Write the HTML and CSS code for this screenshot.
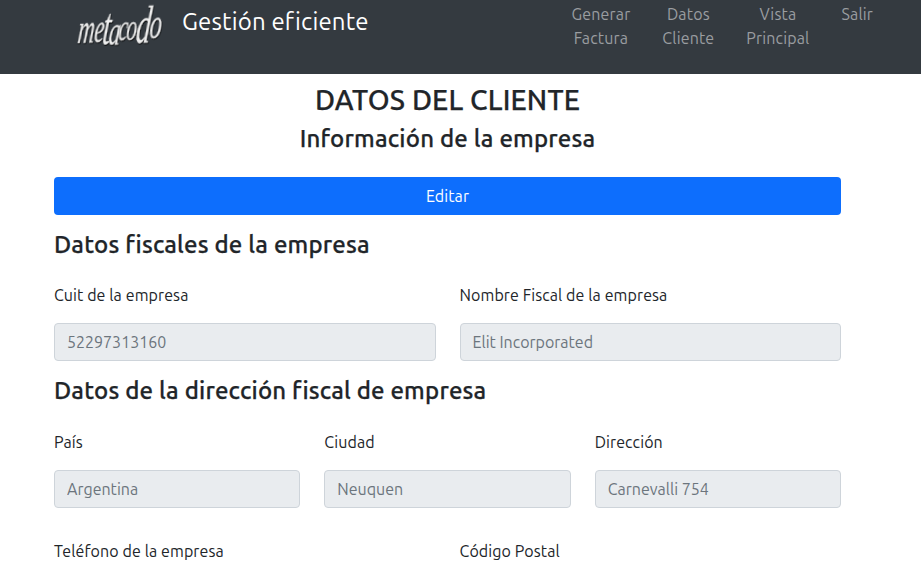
FILE: index.html
```html
<!DOCTYPE html>
<html lang="es">
<head>
<meta charset="utf-8">
<title>Datos del cliente</title>
<link rel="stylesheet" href="styles.css">
</head>
<body>
<header class="navbar">
  <a class="brand" href="#">
    <svg class="logo" width="90" height="60" viewBox="0 0 90 60" role="img" aria-label="metacodo">
      <g class="logo-word" transform="translate(1 43) rotate(-2) skewX(-8) scale(.55 1)">
        <text y="0" x="0" font-size="42">m</text>
        <text y="0" x="30" font-size="40">e</text>
        <text y="2" x="45" font-size="52">t</text>
        <text y="3" x="57" font-size="42">a</text>
        <text y="-1" x="74" font-size="37">c</text>
        <text y="-1" x="88" font-size="38">o</text>
        <text y="2" x="106" font-size="53">d</text>
        <text y="-2" x="130" font-size="44">o</text>
      </g>
    </svg>
    <span class="brand-name">Gestión eficiente</span>
  </a>
  <nav class="menu">
    <a href="#">Generar<br>Factura</a>
    <a href="#">Datos<br>Cliente</a>
    <a href="#">Vista<br>Principal</a>
    <a href="#">Salir</a>
  </nav>
</header>
<main class="content">
  <h1>DATOS DEL CLIENTE</h1>
  <h2 class="subtitle">Información de la empresa</h2>
  <button class="edit" type="button">Editar</button>
  <h2>Datos fiscales de la empresa</h2>
  <div class="row two">
    <div class="field"><label for="cuit">Cuit de la empresa</label><input id="cuit" placeholder="52297313160" disabled></div>
    <div class="field"><label for="nombre">Nombre Fiscal de la empresa</label><input id="nombre" placeholder="Elit Incorporated" disabled></div>
  </div>
  <h2 class="address">Datos de la dirección fiscal de empresa</h2>
  <div class="row three">
    <div class="field"><label for="pais">País</label><input id="pais" placeholder="Argentina" disabled></div>
    <div class="field"><label for="ciudad">Ciudad</label><input id="ciudad" placeholder="Neuquen" disabled></div>
    <div class="field"><label for="direccion">Dirección</label><input id="direccion" placeholder="Carnevalli 754" disabled></div>
  </div>
  <div class="row two contact">
    <div class="field"><label>Teléfono de la empresa</label></div>
    <div class="field"><label>Código Postal</label></div>
  </div>
</main>
</body>
</html>
```
FILE: styles.css
```css
* { box-sizing: border-box; }
body {
  margin: 0;
  background: #fff;
  color: #212529;
  font-family: Ubuntu, "Noto Sans", sans-serif;
  font-size: 16px;
  line-height: 24px;
  letter-spacing: 0.1px;
}
a { color: inherit; text-decoration: none; }
.navbar {
  display: flex;
  justify-content: space-between;
  align-items: flex-start;
  height: 74px;
  padding: 0 48px 0 76px;
  background: #343a40;
}
.brand { display: flex; gap: 16px; color: #fff; }
.logo { display: block; overflow: visible; }
.logo-word {
  fill: #eee;
  stroke: #ddd;
  stroke-width: 0.4px;
  font-family: "Liberation Serif", serif;
  font-style: italic;
  filter: drop-shadow(1px 1.5px 0.5px #08090a);
}
.brand-name { font-size: 24px; line-height: 30px; padding-top: 7px; letter-spacing: 0.17px; }
.menu { display: flex; gap: 32px; padding-top: 2px; color: #9a9da0; text-align: center; letter-spacing: 0.15px; }
.content { width: 787px; margin-left: 54px; }
h1, h2 { margin: 0; font-weight: 500; letter-spacing: 0.18px; -webkit-text-stroke: 0.25px currentColor; }
h1 { padding-top: 9px; font-size: 28px; line-height: 34px; text-align: center; }
h2 { font-size: 24px; line-height: 28px; }
.subtitle { margin-top: 8px; text-align: center; }
.edit {
  display: block;
  width: 100%;
  height: 38px;
  margin: 24px 0 16px;
  padding: 0;
  border: 0;
  border-radius: 4px;
  background: #0d6efd;
  color: #fff;
  font: inherit;
  letter-spacing: inherit;
}
.row { display: grid; gap: 24px; margin-top: 24px; }
.two { grid-template-columns: repeat(2, 1fr); }
.three { grid-template-columns: repeat(3, 1fr); margin-top: 25px; }
.field { display: flex; flex-direction: column; gap: 16px; min-width: 0; }
.field input {
  width: 100%;
  height: 38px;
  padding: 0 12px;
  border: 1px solid #ced4da;
  border-radius: 4px;
  background: #e9ecef;
  font: inherit;
}
.field input::placeholder { color: #6c757d; opacity: 1; }
.address { margin-top: 16px; }
.contact { margin-top: 31px; }
```
